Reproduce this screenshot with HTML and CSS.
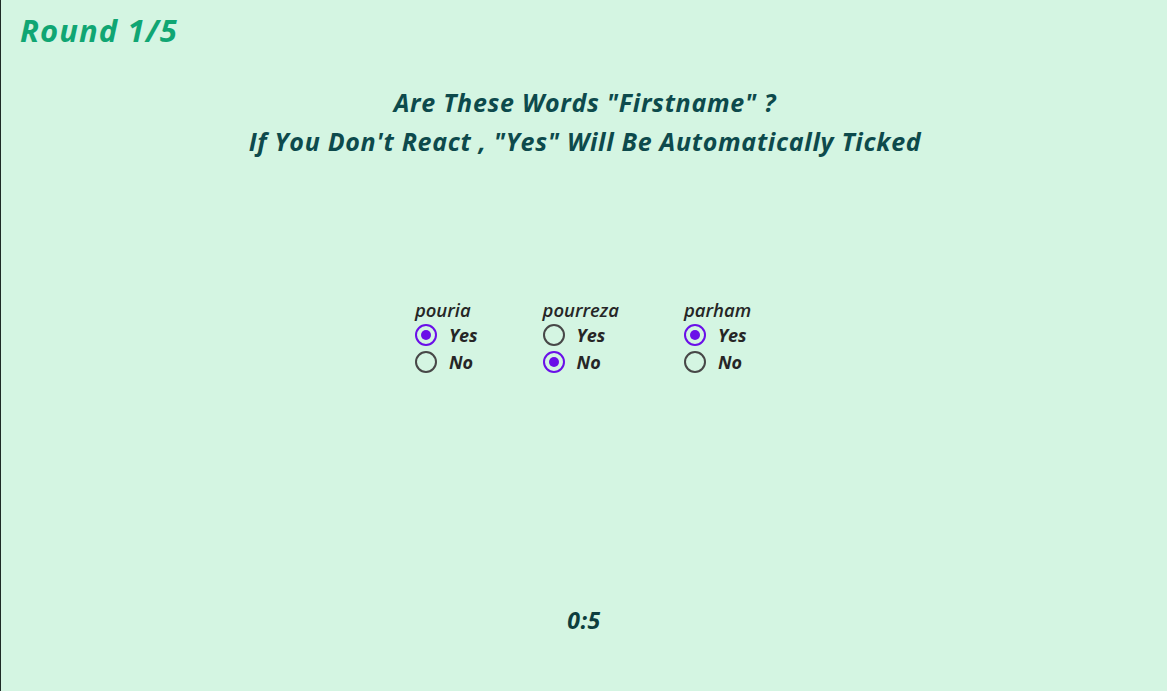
FILE: index.html
```html
<!DOCTYPE html>
<html>
<head>
<meta charset="utf-8">
<link rel="stylesheet" href="styles.css">
</head>
<body>
<div class="page">
  <h1 class="round">Round 1/5</h1>
  <div class="question">
    <p>Are These Words "Firstname" ?</p>
    <p>If You Don't React , "Yes" Will Be Automatically Ticked</p>
  </div>
  <div class="words">
    <div class="word">
      <div class="word-name">pouria</div>
      <label class="opt"><input type="radio" name="w1" checked><span>Yes</span></label>
      <label class="opt"><input type="radio" name="w1"><span>No</span></label>
    </div>
    <div class="word">
      <div class="word-name">pourreza</div>
      <label class="opt"><input type="radio" name="w2"><span>Yes</span></label>
      <label class="opt"><input type="radio" name="w2" checked><span>No</span></label>
    </div>
    <div class="word">
      <div class="word-name">parham</div>
      <label class="opt"><input type="radio" name="w3" checked><span>Yes</span></label>
      <label class="opt"><input type="radio" name="w3"><span>No</span></label>
    </div>
  </div>
  <div class="timer">0:5</div>
</div>
</body>
</html>
```
FILE: styles.css
```css
html, body {
  margin: 0;
  padding: 0;
  height: 100%;
}
body {
  background: #d4f5e2;
  font-family: "Open Sans", "Noto Sans", sans-serif;
}
.page {
  height: 691px;
  box-sizing: border-box;
  border-left: 1px solid #1f2a26;
  display: flex;
  flex-direction: column;
}
.round {
  margin: 0;
  padding: 10px 0 0 19px;
  font-size: 31px;
  line-height: 40px;
  font-style: italic;
  font-weight: 700;
  color: #10a673;
  letter-spacing: 1.1px;
}
.question {
  margin-top: 33px;
  text-align: center;
  color: #0d4a4c;
  font-style: italic;
  font-weight: 700;
  font-size: 25px;
  line-height: 39px;
  letter-spacing: 0.7px;
  padding-left: 2px;
}
.question p {
  margin: 0;
}
.words {
  margin-top: 138px;
  display: flex;
  justify-content: center;
  gap: 65px;
  padding-right: 2px;
}
.word {
  display: flex;
  flex-direction: column;
}
.word-name {
  font-style: italic;
  font-weight: 600;
  font-size: 18.5px;
  line-height: 22px;
  color: #262626;
}
.opt {
  display: flex;
  align-items: center;
  gap: 12px;
  height: 27px;
  font-style: italic;
  font-weight: 700;
  font-size: 18px;
  color: #262626;
}
.opt input {
  appearance: none;
  -webkit-appearance: none;
  margin: 0;
  width: 22px;
  height: 22px;
  border-radius: 50%;
  border: 2.8px solid #474747;
  box-sizing: border-box;
  background: transparent;
  display: grid;
  place-content: center;
}
.opt input:checked {
  border-color: #6a0fe8;
}
.opt input:checked::before {
  content: "";
  width: 10px;
  height: 10px;
  border-radius: 50%;
  background: #6a0fe8;
}
.timer {
  margin-top: auto;
  margin-bottom: 55px;
  text-align: center;
  font-style: italic;
  font-weight: 700;
  font-size: 23px;
  letter-spacing: 0.5px;
  color: #0d3e3e;
}
```
